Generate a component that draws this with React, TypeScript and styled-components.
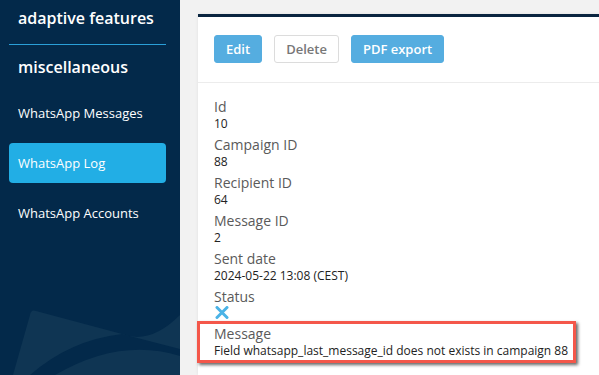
import React from "react";
import styled, { createGlobalStyle } from "styled-components";

const GlobalStyle = createGlobalStyle`
  html, body {
    margin: 0;
    padding: 0;
    background: #f2f2f2;
    font-family: "Open Sans", "Liberation Sans", sans-serif;
  }
  * {
    box-sizing: border-box;
  }
`;

const StyledPage = styled.div`
  display: flex;
  width: 599px;
  height: 375px;
  overflow: hidden;
`;

const Sidebar = styled.nav`
  position: relative;
  width: 180px;
  flex-shrink: 0;
  height: 100%;
  background: #03294a;
  color: #fff;
  overflow: hidden;
  .deco {
    position: absolute;
    left: 0;
    bottom: 0;
  }
`;

const SideHeading = styled.div<{ $divider?: boolean }>`
  position: relative;
  z-index: 1;
  font-size: 16px;
  font-weight: 600;
  line-height: 22px;
  white-space: nowrap;
  margin: 0 14px 0 9px;
  padding: ${(p) => (p.$divider ? "7px 0 15px 9px" : "11px 0 0 9px")};
  border-bottom: ${(p) => (p.$divider ? "1px solid #2a9fd8" : "none")};
`;

const NavList = styled.div`
  position: relative;
  z-index: 1;
  display: flex;
  flex-direction: column;
  gap: 10px;
  margin: 15px 14px 0 9px;
`;

const NavItem = styled.div<{ $active?: boolean }>`
  height: 40px;
  display: flex;
  align-items: center;
  padding-left: 9px;
  font-size: 13px;
  border-radius: 4px;
  background: ${(p) => (p.$active ? "#22aee5" : "transparent")};
`;

const Main = styled.main`
  flex: 1;
  padding: 14px 0 0 18px;
  min-width: 0;
`;

const Card = styled.section`
  background: #fff;
  border-top: 3px solid #0a2540;
  height: 100%;
  box-shadow: 0 0 3px rgba(0, 0, 0, 0.08);
`;

const Toolbar = styled.div`
  display: flex;
  gap: 12px;
  padding: 18px 16px 19px;
  border-bottom: 1px solid #ececec;
`;

const Button = styled.button<{ $ghost?: boolean }>`
  height: 28px;
  padding: 0 11px;
  font-family: inherit;
  font-size: 13px;
  font-weight: 600;
  border-radius: 3px;
  cursor: pointer;
  color: ${(p) => (p.$ghost ? "#777" : "#fff")};
  background: ${(p) => (p.$ghost ? "#fff" : "#55ade0")};
  border: 1px solid ${(p) => (p.$ghost ? "#dcdcdc" : "#55ade0")};
`;

const Fields = styled.div`
  display: flex;
  flex-direction: column;
  gap: 4px;
  padding: 15px 16px 0;
`;

const Field = styled.div`
  display: flex;
  flex-direction: column;
`;

const Label = styled.span`
  font-size: 14px;
  line-height: 18px;
  color: #5a5a5a;
`;

const Value = styled.span`
  font-size: 12px;
  line-height: 16px;
  color: #222;
`;

const Highlight = styled.div`
  width: 379px;
  margin-left: -17px;
  margin-top: -2px;
  padding: 1px 0 1px 14px;
  border: 3px solid #f4574a;
  box-shadow: 2px 2px 3px rgba(0, 0, 0, 0.6);
`;

const CrossIcon = () => (
  <svg width="14" height="13" viewBox="0 0 14 13" style={{ marginLeft: 1 }}>
    <path
      d="M2 1.5 L12 11.5 M12 1.5 L2 11.5"
      stroke="#4bb3e6"
      strokeWidth="3"
      strokeLinecap="round"
    />
  </svg>
);

const SidebarDeco = () => (
  <svg className="deco" width="180" height="70" viewBox="0 0 180 70">
    <path
      d="M36 6 Q31 4 30 10 L13 70 L180 70 L180 10 Q150 40 122 29 Z"
      fill="#0f3553"
    />
    <path
      d="M30 70 Q70 35 122 29 L180 44 L180 51 Q120 32 55 70 Z"
      fill="#03294a"
    />
  </svg>
);

const fields = [
  { label: "Id", value: "10" },
  { label: "Campaign ID", value: "88" },
  { label: "Recipient ID", value: "64" },
  { label: "Message ID", value: "2" },
  { label: "Sent date", value: "2024-05-22 13:08 (CEST)" },
];

const App = () => {
  return (
    <StyledPage>
      <GlobalStyle />
      <Sidebar>
        <SideHeading $divider>adaptive features</SideHeading>
        <SideHeading>miscellaneous</SideHeading>
        <NavList>
          <NavItem>WhatsApp Messages</NavItem>
          <NavItem $active>WhatsApp Log</NavItem>
          <NavItem>WhatsApp Accounts</NavItem>
        </NavList>
        <SidebarDeco />
      </Sidebar>
      <Main>
        <Card>
          <Toolbar>
            <Button>Edit</Button>
            <Button $ghost>Delete</Button>
            <Button>PDF export</Button>
          </Toolbar>
          <Fields>
            {fields.map((f) => (
              <Field key={f.label}>
                <Label>{f.label}</Label>
                <Value>{f.value}</Value>
              </Field>
            ))}
            <Field>
              <Label>Status</Label>
              <CrossIcon />
            </Field>
            <Highlight>
              <Field>
                <Label>Message</Label>
                <Value>
                  Field whatsapp_last_message_id does not exists in campaign 88
                </Value>
              </Field>
            </Highlight>
          </Fields>
        </Card>
      </Main>
    </StyledPage>
  );
};

export default App;
